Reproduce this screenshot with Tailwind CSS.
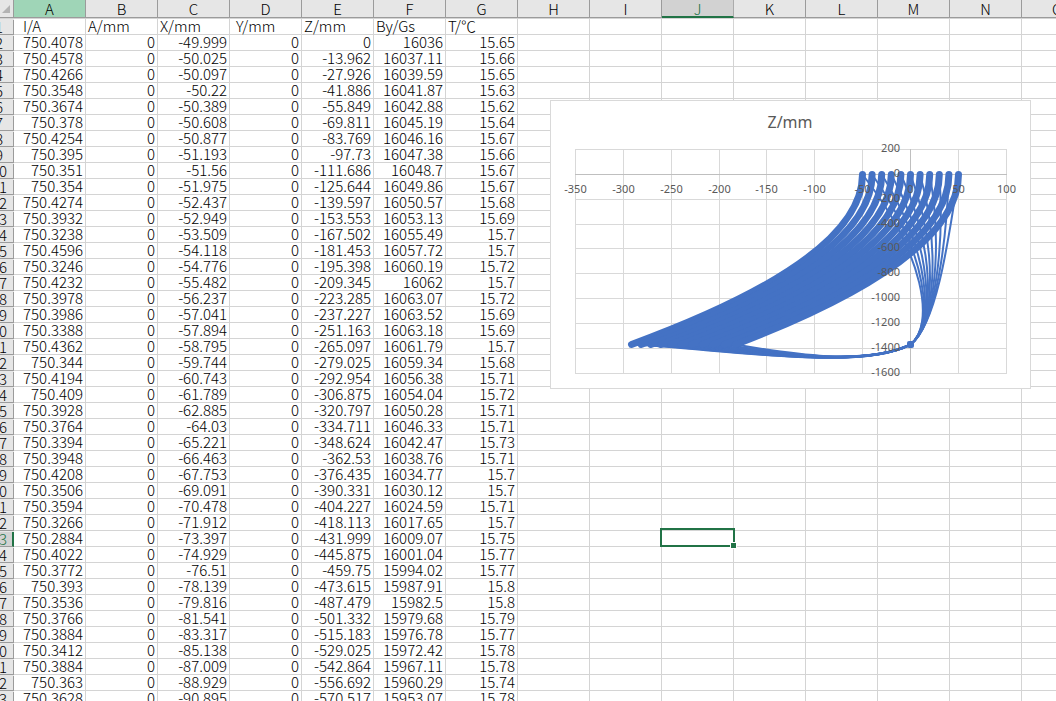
<!DOCTYPE html>
<html lang="en">
<head>
<meta charset="utf-8">
<title>Measurements</title>
<script src="https://cdn.jsdelivr.net/npm/@tailwindcss/browser@4"></script>
</head>
<body class="bg-white">
<main class="relative h-screen overflow-hidden font-['Noto_Sans_CJK_SC',sans-serif] text-[15px]/[13px] font-light text-black">
  <table class="w-[1094px] table-fixed border-separate border-spacing-0 whitespace-nowrap">
    <colgroup id="cols"><col class="w-[14px]"></colgroup>
    <thead><tr id="head" class="h-[19px]">
      <th class="border-b border-[#d4d4d4] p-0"><div class="flex h-[18px] items-center border-r border-b border-[#9b9b9b] bg-[#e6e6e6] pl-[2px]">
        <svg class="size-2" viewBox="0 0 8 8" aria-hidden="true"><path d="M8 0V8H0Z" fill="#b3b3b3"/></svg></div></th>
    </tr></thead>
    <tbody id="rows"></tbody>
  </table>

  <div class="pointer-events-none absolute top-[528px] left-[660px] h-[19px] w-[75px] border-2 border-[#217346]">
    <span class="absolute -right-[4px] -bottom-[4px] size-[7px] border border-white bg-[#217346]"></span>
  </div>

  <figure class="absolute top-[100px] left-[550px] h-[289px] w-[481px] border border-[#d9d9d9] bg-white font-['Noto_Sans',sans-serif] font-normal">
    <svg class="block size-full" viewBox="551 101 479 287" role="img" aria-label="Z/mm scatter chart">
      <g id="grid" stroke="#d9d9d9" fill="none" shape-rendering="crispEdges"></g>
      <path d="M575 174.5H1007M910.5 149V374" stroke="#bfbfbf" shape-rendering="crispEdges"/>
      <g id="curves" fill="none" stroke="#4472c4" stroke-linecap="round"></g>
      <rect x="907" y="341" width="7" height="7" rx="2" fill="#4472c4"/>
      <g id="labels" fill="#595959" font-size="11"></g>
      <text x="790" y="128" text-anchor="middle" font-size="16" fill="#595959">Z/mm</text>
    </svg>
  </figure>
</main>

<script>
const letters = 'ABCDEFGHIJKLMNO'.split('');
const data = `750.4078 -49.999 0 16036 15.65
750.4578 -50.025 -13.962 16037.11 15.66
750.4266 -50.097 -27.926 16039.59 15.65
750.3548 -50.22 -41.886 16041.87 15.63
750.3674 -50.389 -55.849 16042.88 15.62
750.378 -50.608 -69.811 16045.19 15.64
750.4254 -50.877 -83.769 16046.16 15.67
750.395 -51.193 -97.73 16047.38 15.66
750.351 -51.56 -111.686 16048.7 15.67
750.354 -51.975 -125.644 16049.86 15.67
750.4274 -52.437 -139.597 16050.57 15.68
750.3932 -52.949 -153.553 16053.13 15.69
750.3238 -53.509 -167.502 16055.49 15.7
750.4596 -54.118 -181.453 16057.72 15.7
750.3246 -54.776 -195.398 16060.19 15.72
750.4232 -55.482 -209.345 16062 15.7
750.3978 -56.237 -223.285 16063.07 15.72
750.3986 -57.041 -237.227 16063.52 15.69
750.3388 -57.894 -251.163 16063.18 15.69
750.4362 -58.795 -265.097 16061.79 15.7
750.344 -59.744 -279.025 16059.34 15.68
750.4194 -60.743 -292.954 16056.38 15.71
750.409 -61.789 -306.875 16054.04 15.72
750.3928 -62.885 -320.797 16050.28 15.71
750.3764 -64.03 -334.711 16046.33 15.71
750.3394 -65.221 -348.624 16042.47 15.73
750.3948 -66.463 -362.53 16038.76 15.71
750.4208 -67.753 -376.435 16034.77 15.7
750.3506 -69.091 -390.331 16030.12 15.7
750.3594 -70.478 -404.227 16024.59 15.71
750.3266 -71.912 -418.113 16017.65 15.7
750.2884 -73.397 -431.999 16009.07 15.75
750.4022 -74.929 -445.875 16001.04 15.77
750.3772 -76.51 -459.75 15994.02 15.77
750.393 -78.139 -473.615 15987.91 15.8
750.3536 -79.816 -487.479 15982.5 15.8
750.3766 -81.541 -501.332 15979.68 15.79
750.3884 -83.317 -515.183 15976.78 15.77
750.3412 -85.138 -529.025 15972.42 15.78
750.3884 -87.009 -542.864 15967.11 15.78
750.363 -88.929 -556.692 15960.29 15.74
750.3628 -90.895 -570.517 15953.07 15.78`.split('\n').map(line => {
  const [i, x, z, b, t] = line.split(' ');
  return [i, '0', x, '0', z, b, t];
});

const colFill = { A: 'border-[#9b9b9b] bg-[#9fd5b7]', J: 'border-b-2 border-r-[#ababab] border-b-[#217346] bg-[#d2d2d2] text-[#217346]' };
document.getElementById('cols').insertAdjacentHTML('beforeend', letters.map(() => '<col class="w-[72px]">').join(''));
document.getElementById('head').insertAdjacentHTML('beforeend', letters.map(l =>
  `<th scope="col" class="border-b border-[#d4d4d4] p-0 font-light"><div class="flex h-[18px] items-center justify-center border-r border-b ${colFill[l] || 'border-[#9b9b9b] bg-[#e6e6e6]'}">${l}</div></th>`).join(''));

const titles = ['I/A', 'A/mm', 'X/mm', 'Y/mm', 'Z/mm', 'By/Gs', 'T/℃'];
const titlePad = { 0: 'pl-[9px]', 3: 'pl-[6px]' };
const rowHead = n => `<th scope="row" class="h-4 overflow-hidden bg-[#e6e6e6] p-0 font-light"><div class="flex h-[15px] overflow-hidden border-b border-[#9b9b9b] ${n === 33 ? 'border-r-2 border-r-[#217346] bg-[#d2d2d2] text-[#217346]' : 'border-r'}"><span class="-ml-[15px] w-7 shrink-0 text-center">${n}</span></div></th>`;
const cell = (v, c) => `<td class="h-4 border-r border-b border-[#d4d4d4] p-0 pb-[2px] ${c}">${v}</td>`;
const blanks = n => Array(n).fill(cell('', '')).join('');
document.getElementById('rows').innerHTML =
  `<tr>${rowHead(1)}${titles.map((t, i) => cell(t, titlePad[i] || 'pl-[2px]')).join('')}${blanks(8)}</tr>` +
  data.map((r, k) => `<tr>${rowHead(k + 2)}${r.map(v => cell(v, 'pr-[2px] text-right')).join('')}${blanks(8)}</tr>`).join('');

const gx = [575, 623, 671, 719, 766, 814, 862, 910, 958, 1006];
const gy = [149, 174, 199, 224, 248, 273, 298, 323, 348, 373];
document.getElementById('grid').innerHTML =
  gx.map(x => `<path d="M${x + .5} 149V374"/>`).join('') + gy.map(y => `<path d="M575 ${y + .5}H1007"/>`).join('');

// Eleven parabolic trajectories, each joined to the common point by smoothed connecting lines.
let thin = '', thick = '';
for (let i = 0; i <= 10; i++) {
  const f = i / 10, s = 862.5 + 9.6 * i, e = 631.5 + 9.5 * i + .09 * i * i;
  thick += `<path d="M${s} 174.5Q${s} 259.5 ${e} 344.5"/>`;
  thin += `<path d="M${e} 344.5C${724 + 66 * f} ${349 + 5 * f} ${860 + 5 * f} ${372 - 6 * f} 910.5 344.5"/>`;
  thin += `<path d="M910.5 344.5C${935 + 2 * f} 325 ${925 + 24 * f} ${255 - 18 * f} ${s} 174.5"/>`;
}
document.getElementById('curves').innerHTML = `<g stroke-width="2">${thin}</g><g stroke-width="7">${thick}</g>`;
document.getElementById('labels').innerHTML =
  gx.map((x, i) => `<text x="${x + .5}" y="193" text-anchor="middle">${-350 + 50 * i}</text>`).join('') +
  gy.map((y, i) => `<text x="900" y="${y + 3}" text-anchor="end">${200 - 200 * i}</text>`).join('');
</script>
</body>
</html>
